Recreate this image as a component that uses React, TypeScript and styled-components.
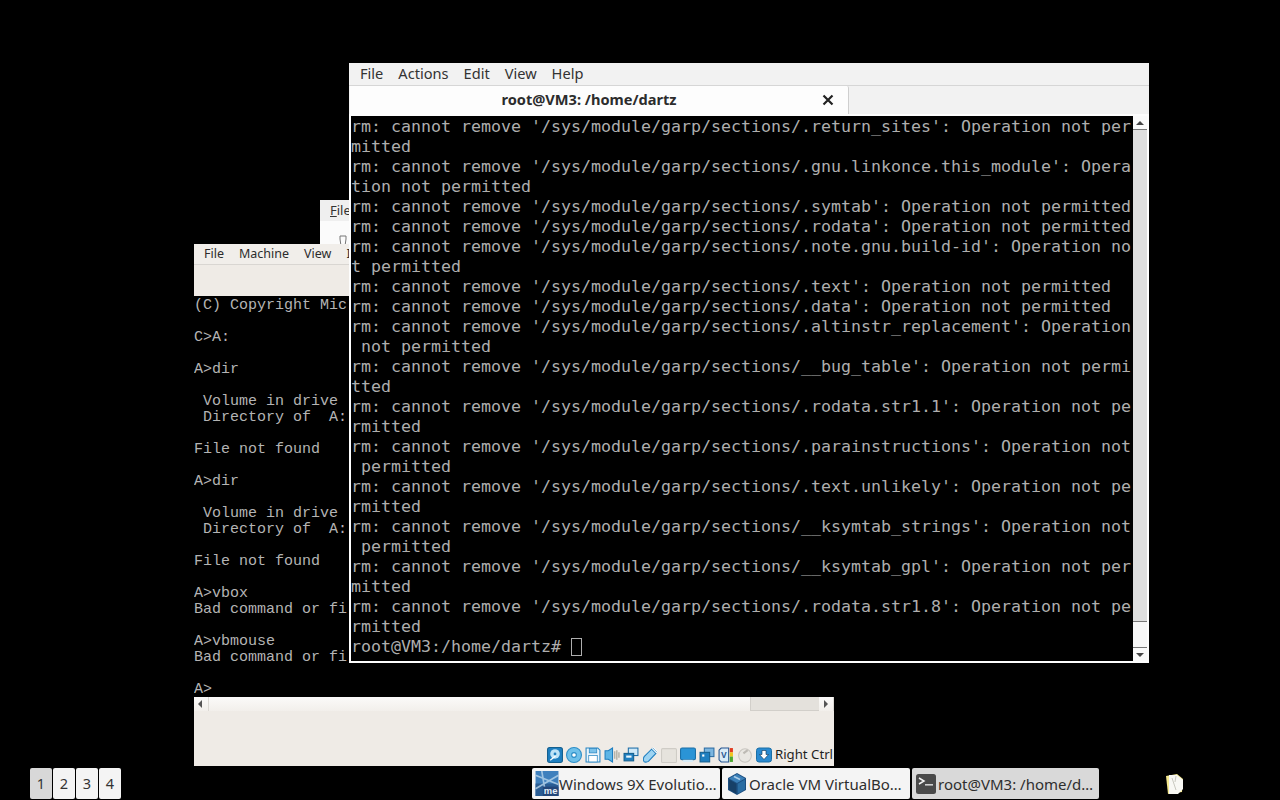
import React from "react";
import styled, { createGlobalStyle } from "styled-components";

const Global = createGlobalStyle`
  html, body { margin: 0; padding: 0; background: #000; overflow: hidden; }
`;

const UI = `"Noto Sans", "Open Sans", sans-serif`;

const Desktop = styled.div`
  position: relative;
  width: 1280px;
  height: 800px;
  background: #000;
  overflow: hidden;
  display: flex;
  flex-direction: column;
  justify-content: flex-end;
  font-family: ${UI};
`;

/* ---------- windows on the desktop canvas ---------- */
const BackWindow = styled.div`
  position: absolute;
  left: 320px;
  top: 200px;
  width: 60px;
  height: 60px;
  background: #fbfbfb;
  display: flex;
  flex-direction: column;
`;
const BackMenu = styled.div`
  height: 21px;
  background: #efefef;
  padding-left: 10px;
  font-size: 13px;
  line-height: 20px;
  color: #333;
`;
const BackBody = styled.div`
  flex: 1;
  padding: 9px 0 0 19px;
`;
const Under = styled.span`
  text-decoration: underline;
`;

const VmWindow = styled.div`
  position: absolute;
  left: 194px;
  top: 244px;
  width: 640px;
  height: 522px;
  display: flex;
  flex-direction: column;
  background: #efebe6;
`;
const VmMenu = styled.div`
  height: 20px;
  display: flex;
  gap: 15px;
  padding: 0 0 0 10px;
  font-size: 12.5px;
  line-height: 19px;
  color: #2c2c2c;
  background: #f1eeea;
  border-bottom: 1px solid #d9d6d2;
`;
const VmToolbar = styled.div`
  height: 31px;
  background: #efebe6;
`;
const DosScreen = styled.div`
  height: 399px;
  padding-top: 2px;
  background: #000;
  overflow: hidden;
  color: #b4b4b4;
  font-family: "Liberation Mono", monospace;
  font-size: 15px;
  line-height: 16px;
`;
const DosLine = styled.div`
  height: 16px;
  white-space: pre;
`;
const VmScrollbar = styled.div`
  height: 14px;
  display: flex;
  background: linear-gradient(#fbfaf9, #f2efeb);
`;
const ArrowCell = styled.div<{ $w: number }>`
  width: ${(p) => p.$w}px;
  display: flex;
  align-items: center;
  justify-content: center;
  border-right: 1px solid #dcd9d4;
`;
const VmTrack = styled.div`
  flex: 1;
  display: flex;
  justify-content: flex-end;
`;
const VmThumb = styled.div`
  width: 68px;
  height: 13px;
  background: #e4e1dc;
  border-left: 1px solid #d2cfca;
  border-bottom: 1px solid #d2cfca;
`;
const StatusArea = styled.div`
  flex: 1;
  display: flex;
  align-items: flex-end;
  justify-content: flex-end;
  padding-bottom: 3px;
`;
const StatusIcons = styled.div`
  display: flex;
  align-items: center;
  gap: 3px;
  margin-right: 3px;
  & > svg {
    width: 16px;
    height: 16px;
  }
`;
const HostKey = styled.span`
  font-size: 13.2px;
  line-height: 17px;
  color: #1f1f1f;
  white-space: nowrap;
  margin-right: 1px;
`;

const Terminal = styled.div`
  position: absolute;
  left: 349px;
  top: 63px;
  width: 800px;
  height: 600px;
  background: #f5f5f5;
  display: flex;
  flex-direction: column;
`;
const TermMenu = styled.div`
  height: 22px;
  display: flex;
  gap: 15px;
  padding-left: 11px;
  font-size: 14.6px;
  line-height: 21px;
  color: #333;
  background: #f2f2f2;
  border-bottom: 1px solid #d6d6d6;
`;
const TabBar = styled.div`
  height: 28px;
  background: #f2f2f2;
  display: flex;
  padding-left: 1px;
`;
const Tab = styled.div`
  position: relative;
  width: 499px;
  background: #fdfdfd;
  border-right: 1px solid #cfcfcf;
  border-radius: 0 2px 0 0;
  display: flex;
  align-items: center;
  justify-content: center;
  padding: 0 20px 2px 0;
  box-sizing: border-box;
  font-size: 14.6px;
  font-weight: 700;
  color: #2c2c2c;
`;
const TabClose = styled.svg`
  position: absolute;
  right: 14px;
  top: 8px;
`;
const TermBody = styled.div`
  flex: 1;
  display: flex;
  background: #fdfdfd;
  padding: 2px 1px 2px 2px;
  min-height: 0;
`;
const TermScreen = styled.div`
  width: 782px;
  background: #000;
  overflow: hidden;
  padding-top: 1px;
  color: #aeaeae;
  font-family: "DejaVu Sans Mono", monospace;
  font-size: 16.62px;
  line-height: 20px;
`;
const TermLine = styled.div`
  height: 20px;
  white-space: pre;
  display: flex;
`;
const Cursor = styled.span`
  display: inline-block;
  width: 9px;
  height: 16px;
  margin-top: 1px;
  border: 1px solid #aeaeae;
`;
const TermScrollbar = styled.div`
  width: 14px;
  display: flex;
  flex-direction: column;
  background: #f6f6f6;
`;
const TermArrow = styled.div<{ $top?: boolean }>`
  height: 13px;
  display: flex;
  align-items: center;
  justify-content: center;
  background: #fafafa;
  ${(p) => (p.$top ? "border-bottom" : "border-top")}: 1px solid #777;
`;
const TermThumb = styled.div`
  height: 491px;
  background: #dedede;
  border-bottom: 1px solid #777;
`;
const TermTrough = styled.div`
  flex: 1;
  background: #f7f7f7;
`;

/* ---------- taskbar ---------- */
const Taskbar = styled.div`
  position: relative;
  height: 31px;
  margin-bottom: 1px;
  display: flex;
  padding-left: 30px;
`;
const Pager = styled.div`
  display: flex;
  gap: 1px;
  width: 502px;
`;
const PagerButton = styled.div<{ $active?: boolean }>`
  width: 22px;
  border-radius: 2px;
  background: ${(p) => (p.$active ? "#d8d8d8" : "#f4f4f4")};
  font-size: 14.5px;
  line-height: 31px;
  text-align: center;
  color: #333;
`;
const Tasks = styled.div`
  display: flex;
  gap: 2px;
`;
const TaskButton = styled.div<{ $w: number; $active?: boolean }>`
  width: ${(p) => p.$w}px;
  box-sizing: border-box;
  border-radius: 2px;
  background: ${(p) => (p.$active ? "#d9d9d9" : "#f4f4f4")};
  display: flex;
  align-items: center;
  padding: 0 3px 0 2px;
  font-size: 15px;
  color: #2e2e2e;
`;
const TaskIconSlot = styled.div<{ $w: number }>`
  width: ${(p) => p.$w}px;
  display: flex;
  align-items: center;
  justify-content: center;
`;
const TaskLabel = styled.span`
  white-space: nowrap;
`;
const Tray = styled.div`
  margin-left: 65px;
  display: flex;
  align-items: center;
`;

/* ---------- content ---------- */
const termLines = [
  "rm: cannot remove '/sys/module/garp/sections/.return_sites': Operation not per",
  "mitted",
  "rm: cannot remove '/sys/module/garp/sections/.gnu.linkonce.this_module': Opera",
  "tion not permitted",
  "rm: cannot remove '/sys/module/garp/sections/.symtab': Operation not permitted",
  "rm: cannot remove '/sys/module/garp/sections/.rodata': Operation not permitted",
  "rm: cannot remove '/sys/module/garp/sections/.note.gnu.build-id': Operation no",
  "t permitted",
  "rm: cannot remove '/sys/module/garp/sections/.text': Operation not permitted",
  "rm: cannot remove '/sys/module/garp/sections/.data': Operation not permitted",
  "rm: cannot remove '/sys/module/garp/sections/.altinstr_replacement': Operation",
  " not permitted",
  "rm: cannot remove '/sys/module/garp/sections/__bug_table': Operation not permi",
  "tted",
  "rm: cannot remove '/sys/module/garp/sections/.rodata.str1.1': Operation not pe",
  "rmitted",
  "rm: cannot remove '/sys/module/garp/sections/.parainstructions': Operation not",
  " permitted",
  "rm: cannot remove '/sys/module/garp/sections/.text.unlikely': Operation not pe",
  "rmitted",
  "rm: cannot remove '/sys/module/garp/sections/__ksymtab_strings': Operation not",
  " permitted",
  "rm: cannot remove '/sys/module/garp/sections/__ksymtab_gpl': Operation not per",
  "mitted",
  "rm: cannot remove '/sys/module/garp/sections/.rodata.str1.8': Operation not pe",
  "rmitted",
];

const dosLines = [
  "(C) Copyright Mic",
  "",
  "C>A:",
  "",
  "A>dir",
  "",
  " Volume in drive",
  " Directory of  A:",
  "",
  "File not found",
  "",
  "A>dir",
  "",
  " Volume in drive",
  " Directory of  A:",
  "",
  "File not found",
  "",
  "A>vbox",
  "Bad command or fi",
  "",
  "A>vbmouse",
  "Bad command or fi",
  "",
  "A>",
];

const Tri = ({ dir, c = "#555" }: { dir: "l" | "r" | "u" | "d"; c?: string }) => {
  const pts = { l: "6,1 6,9 2,5", r: "3,1 3,9 7,5", u: "1,7 9,7 5,3", d: "1,3 9,3 5,7" }[dir];
  return (
    <svg width="10" height="10" viewBox="0 0 10 10">
      <polygon points={pts} fill={c} />
    </svg>
  );
};

const B = "#1f7fc0";
const L = "#bfe3f7";

const HddIcon = () => (
  <svg viewBox="0 0 15 15">
    <rect x=".5" y=".5" width="14" height="14" rx="2" fill={B} stroke="#15608f" />
    <circle cx="7.5" cy="6.5" r="4.5" fill={L} />
    <circle cx="7.5" cy="6.5" r="1.3" fill={B} />
    <path d="M3 12.5l5-4" stroke="#fff" strokeWidth="1.2" />
  </svg>
);
const CdIcon = () => (
  <svg viewBox="0 0 15 15">
    <circle cx="7.5" cy="7.5" r="7" fill="#6ec0ea" stroke="#2d8ec7" />
    <circle cx="7.5" cy="7.5" r="2.2" fill="#fff" stroke="#2d8ec7" />
  </svg>
);
const FloppyIcon = () => (
  <svg viewBox="0 0 15 15">
    <path d="M1 1h11l2 2v11H1z" fill="#e9f4fb" stroke="#2a86c2" />
    <rect x="4" y="1.5" width="7" height="4" fill="#7cc2ea" stroke="#2a86c2" strokeWidth=".7" />
    <rect x="3.5" y="8" width="8" height="6" fill="#fff" stroke="#2a86c2" strokeWidth=".7" />
  </svg>
);
const AudioIcon = () => (
  <svg viewBox="0 0 15 15">
    <path d="M1 3.5h3L8 1v13l-4-2.5H1z" fill="#5db5e6" stroke="#1f7fc0" />
    <path d="M10 4v7M12 3v9M14 5v5" stroke="#b5b3a8" strokeWidth="1.4" />
  </svg>
);
const NetIcon = () => (
  <svg viewBox="0 0 15 15">
    <rect x="5" y="1" width="9" height="7" fill="#cfe9f8" stroke="#1f6fa8" />
    <rect x="1" y="6" width="9" height="7" fill={B} stroke="#15608f" />
    <rect x="3" y="8" width="5" height="2" fill="#eaf6fd" />
  </svg>
);
const UsbIcon = () => (
  <svg viewBox="0 0 15 15">
    <path d="M9 2l4 4-7 7.5c-1.5 1-4 1-4.5-.5s-.2-3 .5-4z" fill="#9ed4f2" stroke="#1f7fc0" />
    <path d="M10 1l4 4" stroke="#fff" strokeWidth="2" />
    <path d="M10 .8l4 4" stroke="#1f7fc0" strokeWidth=".6" />
  </svg>
);
const FolderIcon = () => (
  <svg viewBox="0 0 15 15">
    <rect x=".5" y="1.5" width="14" height="13" rx="1" fill="#e6e3dd" stroke="#cfccc6" />
  </svg>
);
const DisplayIcon = () => (
  <svg viewBox="0 0 15 15">
    <rect x=".5" y="1" width="14" height="11" rx="1.5" fill="#2a94d6" stroke="#1b6fa6" />
    <rect x="3" y="12" width="9" height="2" fill="#d7ecf8" />
  </svg>
);
const CaptureIcon = () => (
  <svg viewBox="0 0 15 15">
    <rect x="5" y="1" width="9" height="8" fill="#7cb6e0" stroke="#2f6ea3" />
    <rect x="1" y="5" width="9" height="9" fill="#1f7fc0" stroke="#15608f" />
    <rect x="3" y="7" width="2" height="2" fill="#fff" />
  </svg>
);
const VtIcon = () => (
  <svg viewBox="0 0 15 15">
    <path d="M1 3l2-2h7v13H3l-2-2z" fill="#d9ebf7" stroke="#27558f" />
    <text x="5.5" y="10.5" fontSize="8" fontWeight="700" fill="#27558f" textAnchor="middle" fontFamily="Liberation Sans">V</text>
    <rect x="11" y="1" width="3" height="4" fill="#e23b1f" />
    <rect x="11" y="5" width="3" height="4" fill="#f0c419" />
    <rect x="11" y="9" width="3" height="5" fill="#4ba82e" />
  </svg>
);
const MouseIcon = () => (
  <svg viewBox="0 0 15 15">
    <ellipse cx="7.5" cy="8" rx="6" ry="6.3" fill="#e9e7e2" stroke="#c9c6c0" />
    <path d="M6 6l4-3" stroke="#bdbab4" strokeWidth="2" />
  </svg>
);
const HostArrowIcon = () => (
  <svg viewBox="0 0 16 15">
    <rect x=".5" y=".5" width="15" height="14" rx="2.5" fill="#2a8ad0" stroke="#1b6fa6" />
    <path d="M6 3h4v4h2.5L8 12 3.5 7H6z" fill="#fff" stroke="#0d2f4f" strokeWidth=".6" />
  </svg>
);

const MeLogo = () => (
  <svg width="24" height="25" viewBox="0 0 22 24">
    <rect width="22" height="24" fill="#3f80bd" />
    <rect y="12" width="22" height="12" fill="#2a5d94" />
    <path d="M0 4l22 9M6 0l4 24M0 17l22-13" stroke="#b9d6ec" strokeWidth="1.6" opacity=".8" />
    <rect x="7" y="15" width="15" height="9" fill="#24477a" />
    <text x="14.5" y="22.5" fontSize="9" fontWeight="700" fill="#e8f1f8" textAnchor="middle" fontFamily="Liberation Sans">me</text>
  </svg>
);
const VboxLogo = () => (
  <svg width="20" height="24" viewBox="0 0 20 24">
    <path d="M10 1l9 5v12l-9 5-9-5V6z" fill="#1d4f80" />
    <path d="M10 2l8 4.4-8 4.5-8-4.5z" fill="#3a7fb8" />
    <path d="M2 7.5l7.3 4.2v10L2 17.5z" fill="#174068" />
    <path d="M18 7.5l-7.3 4.2v10l7.3-4.2z" fill="#2a6da3" />
    <path d="M7 4.5l6 3" stroke="#a9cde8" strokeWidth="1.6" />
  </svg>
);
const TermLogo = () => (
  <svg width="20" height="20" viewBox="0 0 20 20">
    <rect width="20" height="20" rx="2.5" fill="#4a4a4a" />
    <path d="M3 4l5 3-5 3" stroke="#f3f3f3" strokeWidth="1.5" fill="none" />
    <rect x="9" y="10" width="8" height="1.6" fill="#d0d0d0" />
  </svg>
);
const NoteIcon = () => (
  <svg width="20" height="22" viewBox="0 0 20 22">
    <path d="M2 3l11-2 6 5-1 13-14 2z" fill="#f4e88f" />
    <path d="M5 2h8l6 5v9l-5 5H5z" fill="#f8f8f4" />
    <path d="M8 5l4 12M12 3l-1 6" stroke="#c9c9c0" strokeWidth="1" />
  </svg>
);

export default function App() {
  return (
    <>
      <Global />
      <Desktop>
        <BackWindow>
          <BackMenu>
            <Under>F</Under>ile
          </BackMenu>
          <BackBody>
            <svg width="8" height="12" viewBox="0 0 8 12">
              <path d="M1 1h6v3l-1 7H2L1 4z" fill="none" stroke="#777" strokeWidth="1" />
            </svg>
          </BackBody>
        </BackWindow>

        <VmWindow>
          <VmMenu>
            <span>File</span>
            <span>Machine</span>
            <span>View</span>
            <span>I</span>
          </VmMenu>
          <VmToolbar />
          <DosScreen>
            {dosLines.map((l, i) => (
              <DosLine key={i}>{l}</DosLine>
            ))}
          </DosScreen>
          <VmScrollbar>
            <ArrowCell $w={14}>
              <Tri dir="l" />
            </ArrowCell>
            <VmTrack>
              <VmThumb />
            </VmTrack>
            <ArrowCell $w={14}>
              <Tri dir="r" />
            </ArrowCell>
          </VmScrollbar>
          <StatusArea>
            <StatusIcons>
              <HddIcon />
              <CdIcon />
              <FloppyIcon />
              <AudioIcon />
              <NetIcon />
              <UsbIcon />
              <FolderIcon />
              <DisplayIcon />
              <CaptureIcon />
              <VtIcon />
              <MouseIcon />
              <HostArrowIcon />
            </StatusIcons>
            <HostKey>Right Ctrl</HostKey>
          </StatusArea>
        </VmWindow>

        <Terminal>
          <TermMenu>
            <span>File</span>
            <span>Actions</span>
            <span>Edit</span>
            <span>View</span>
            <span>Help</span>
          </TermMenu>
          <TabBar>
            <Tab>
              root@VM3: /home/dartz
              <TabClose width="12" height="12" viewBox="0 0 12 12">
                <path d="M1.5 1.5l9 9M10.5 1.5l-9 9" stroke="#222" strokeWidth="2.2" />
              </TabClose>
            </Tab>
          </TabBar>
          <TermBody>
            <TermScreen>
              {termLines.map((l, i) => (
                <TermLine key={i}>{l}</TermLine>
              ))}
              <TermLine>
                root@VM3:/home/dartz# <Cursor />
              </TermLine>
            </TermScreen>
            <TermScrollbar>
              <TermArrow $top>
                <Tri dir="u" c="#444" />
              </TermArrow>
              <TermThumb />
              <TermTrough />
              <TermArrow>
                <Tri dir="d" c="#444" />
              </TermArrow>
            </TermScrollbar>
          </TermBody>
        </Terminal>

        <Taskbar>
          <Pager>
            <PagerButton $active>1</PagerButton>
            <PagerButton>2</PagerButton>
            <PagerButton>3</PagerButton>
            <PagerButton>4</PagerButton>
          </Pager>
          <Tasks>
            <TaskButton $w={188}>
              <TaskIconSlot $w={25}>
                <MeLogo />
              </TaskIconSlot>
              <TaskLabel>Windows 9X Evolutio…</TaskLabel>
            </TaskButton>
            <TaskButton $w={188}>
              <TaskIconSlot $w={25}>
                <VboxLogo />
              </TaskIconSlot>
              <TaskLabel>Oracle VM VirtualBo…</TaskLabel>
            </TaskButton>
            <TaskButton $w={187} $active>
              <TaskIconSlot $w={24}>
                <TermLogo />
              </TaskIconSlot>
              <TaskLabel>root@VM3: /home/d…</TaskLabel>
            </TaskButton>
          </Tasks>
          <Tray>
            <NoteIcon />
          </Tray>
        </Taskbar>
      </Desktop>
    </>
  );
}
